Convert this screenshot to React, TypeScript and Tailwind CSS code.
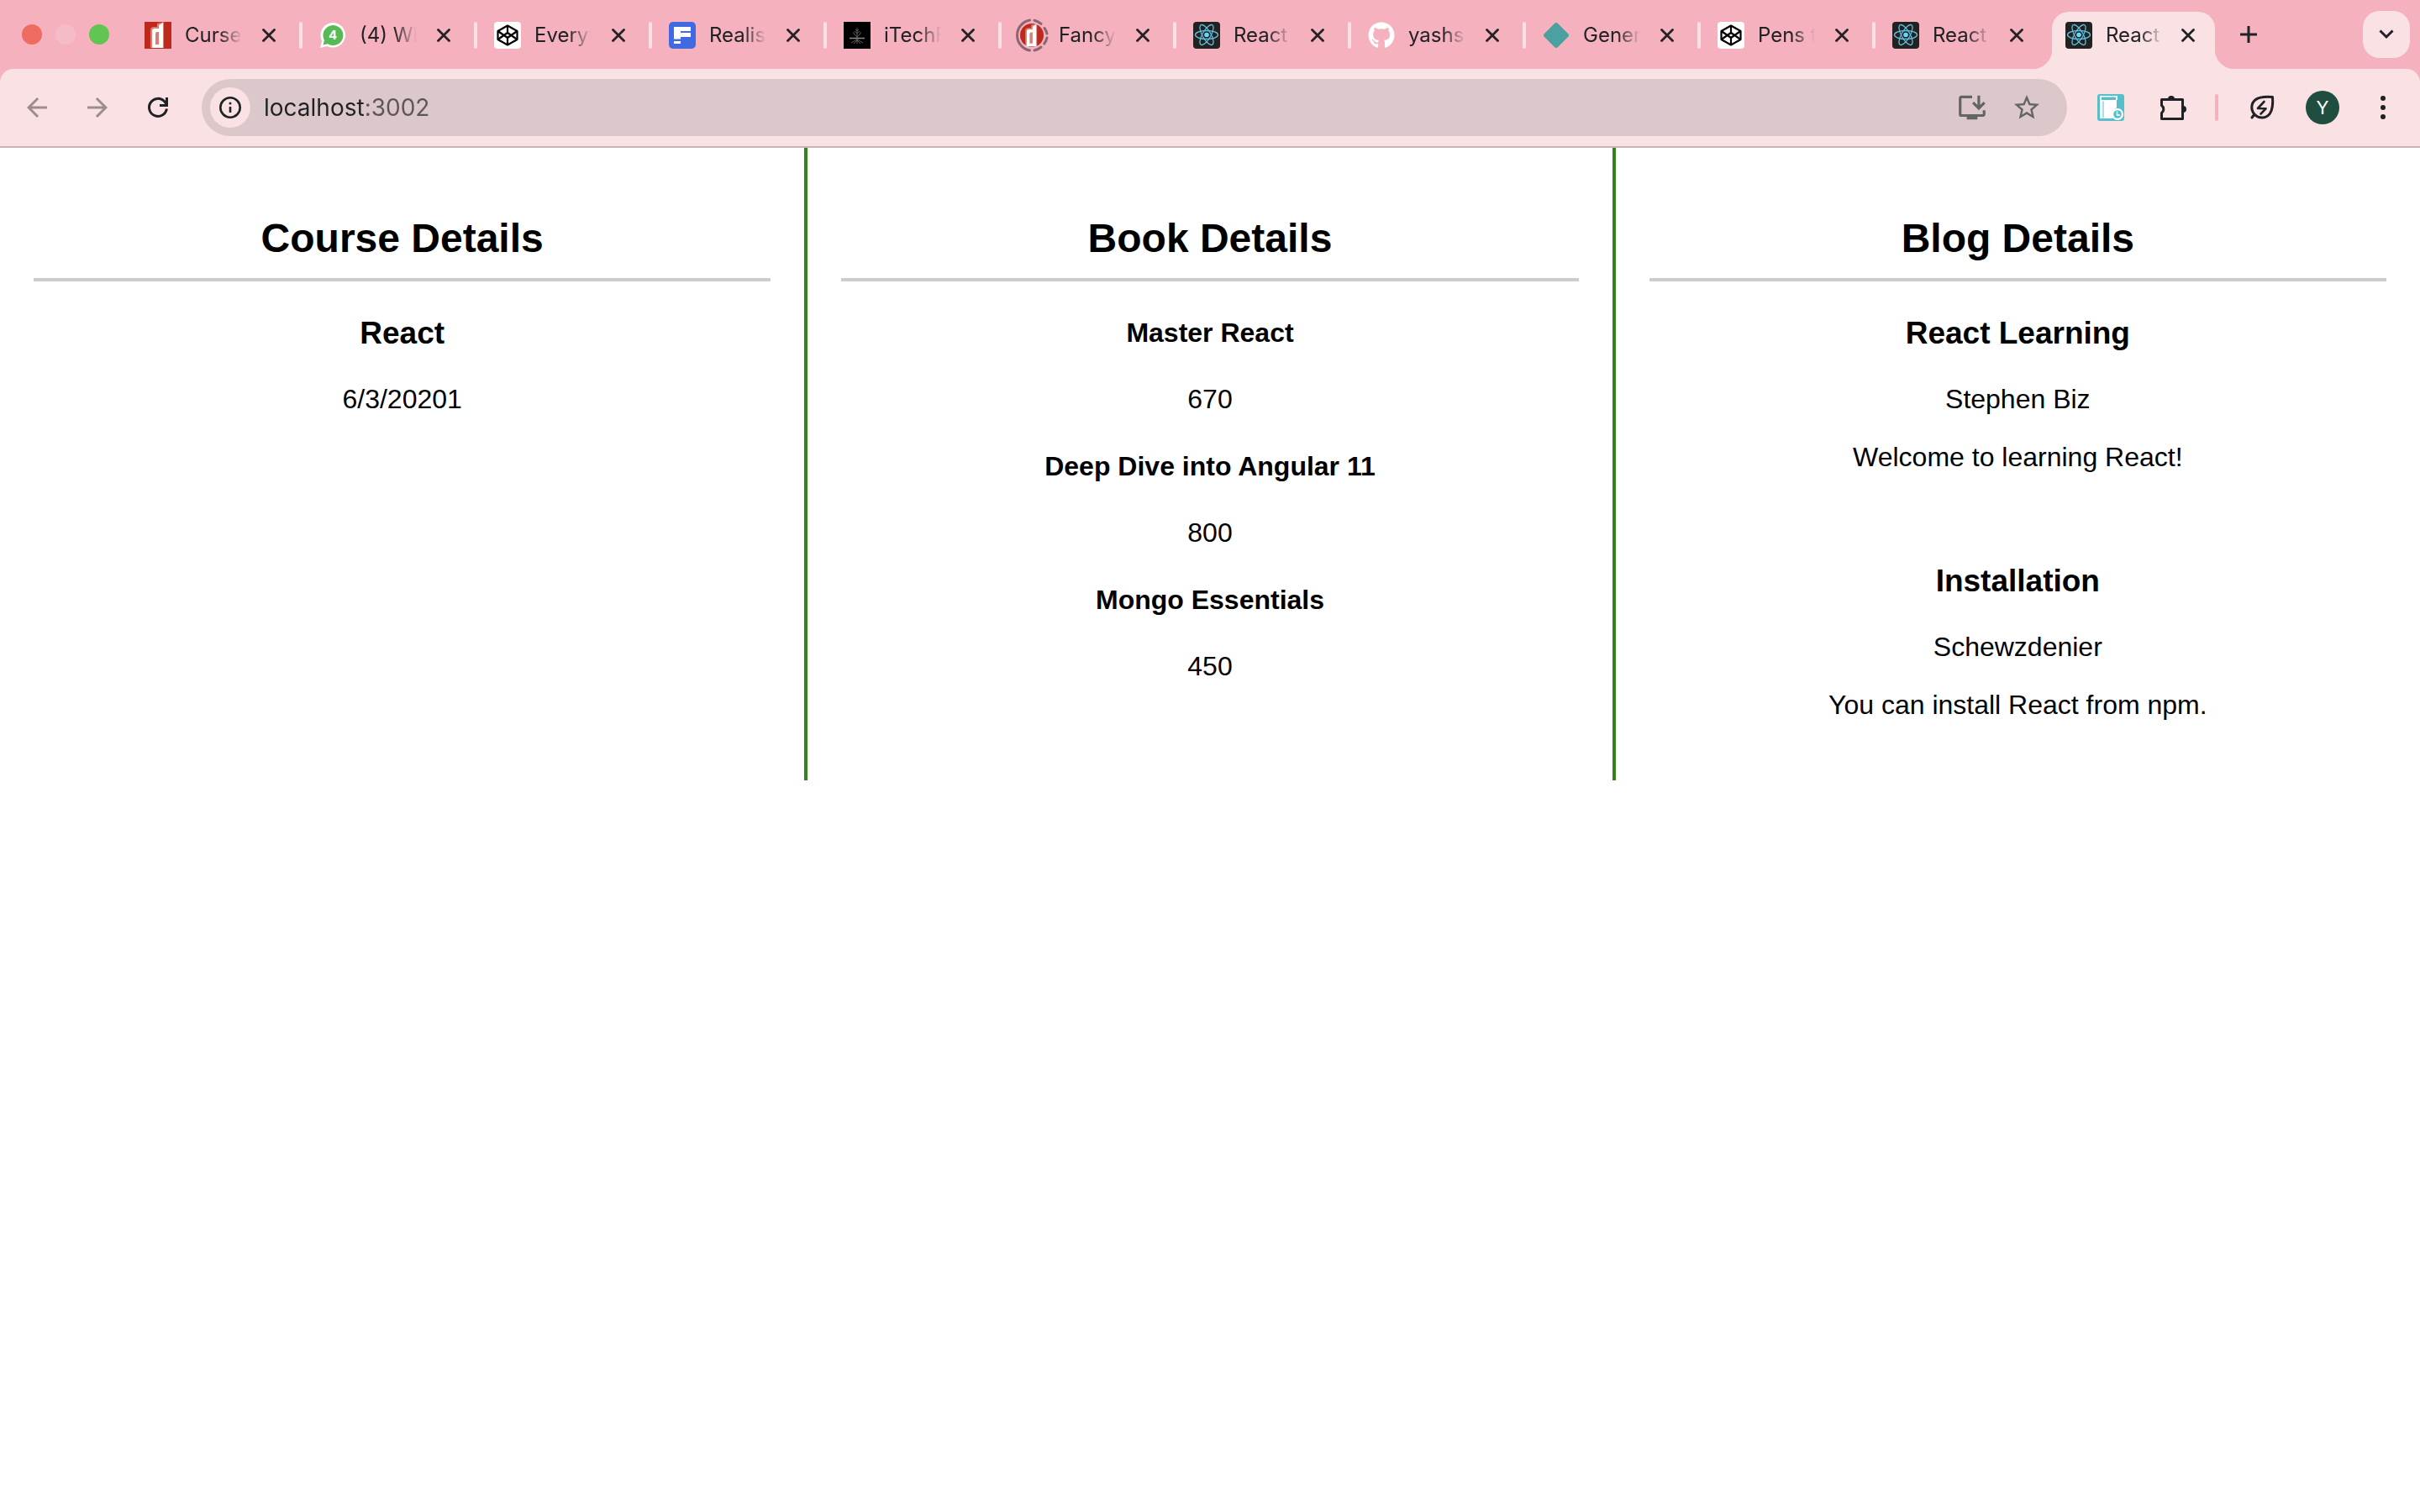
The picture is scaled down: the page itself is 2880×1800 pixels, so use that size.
import React from "react";
import { MdArrowBack, MdArrowForward, MdInstallDesktop, MdStarBorder } from "react-icons/md";
import { FaGithub } from "react-icons/fa";

function DLogo({ round = false }: { round?: boolean }) {
  return (
    <svg viewBox="0 0 32 32" className="size-full" aria-hidden="true">
      {round ? <circle cx="16" cy="16" r="16" fill="#bf281c" /> : <rect width="32" height="32" fill="#bf281c" />}
      <path d="M7 31V10q0-4 4-4h4V2l8-2v31Z" fill="#fff" opacity=".4" />
      <path d="M9 31V11q0-3 3-3h5V4l5-3v30ZM13 27h4V12h-2q-2 0-2 2Z" fill="#fff" fillRule="evenodd" />
    </svg>
  );
}

function WhatsAppIcon() {
  return (
    <svg viewBox="0 0 32 32" className="size-full" aria-hidden="true">
      <path d="M1 31 3 22.500A14.800 14.800 0 1 1 9.500 29Z" fill="#fff" />
      <path d="M4.500 27.500 6 22A12 12 0 1 1 10 26.200Z" fill="#57bb55" />
      <text x="16" y="21" textAnchor="middle" fontSize="15" fontWeight="700" fontFamily="Inter, sans-serif" fill="#fff">4</text>
    </svg>
  );
}

function CodePenIcon() {
  return (
    <svg viewBox="0 0 32 32" className="size-full" fill="none" aria-hidden="true">
      <rect width="32" height="32" rx="4" fill="#fff" />
      <g stroke="#000" strokeWidth="2.200" strokeLinejoin="round">
        <path d="M16 4.500 27.500 11v10L16 27.500 4.500 21V11Z" />
        <path d="m4.500 11 11.500 8 11.500-8M4.500 21 16 13l11.500 8M16 4.500V13M16 19v8.500" />
      </g>
    </svg>
  );
}

function FIcon() {
  return (
    <svg viewBox="0 0 32 32" className="size-full" aria-hidden="true">
      <rect width="32" height="32" rx="5" fill="#4169e1" />
      <path d="M6 6h20v5H14v2h12v5H14v2.500H6ZM6 23h8v3H6Z" fill="#fff" />
    </svg>
  );
}

function TreeIcon() {
  return (
    <svg viewBox="0 0 32 32" className="size-full" fill="none" aria-hidden="true">
      <rect width="32" height="32" fill="#000" />
      <g stroke="#5d5d5d" strokeWidth="1">
        <path d="M16 7v19M16 18l-4-4M16 18l4-4M16 14l-3-3M16 14l3-3M16 11l-2-2M16 11l2-2M12 14v-2M20 14v-2M16 21l-7 4M16 21l7 4M16 22l-4 4M16 22l4 4" />
        <path d="M7 19.500h18" stroke="#8a8a8a" strokeWidth="1.500" />
      </g>
    </svg>
  );
}

function ReactIcon() {
  return (
    <svg viewBox="0 0 32 32" className="size-full" fill="none" aria-hidden="true">
      <rect width="32" height="32" rx="4" fill="#222" />
      <circle cx="16" cy="15.500" r="2.800" fill="#61dafb" />
      <g stroke="#61bfe0" strokeWidth="1.300">
        <ellipse cx="16" cy="15.500" rx="13.500" ry="5" />
        <ellipse cx="16" cy="15.500" rx="13.500" ry="5" transform="rotate(60 16 15.500)" />
        <ellipse cx="16" cy="15.500" rx="13.500" ry="5" transform="rotate(120 16 15.500)" />
      </g>
    </svg>
  );
}

function DiamondIcon() {
  return (
    <svg viewBox="0 0 32 32" className="size-full" aria-hidden="true">
      <path d="M14 2q2-2 4 0l12.500 12.500q1.500 1.500 0 3L18 30q-2 2-4 0L1.500 17.500q-1.500-1.500 0-3Z" fill="#4aa19f" />
    </svg>
  );
}

function LoadingFavicon() {
  return (
    <span className="relative block size-full p-0.5">
      <DLogo round />
      <svg viewBox="0 0 40 40" className="absolute -top-1 -left-1 size-10 max-w-none" fill="none" aria-hidden="true">
        <path d="M17.500 2A18.300 18.300 0 0 0 17.500 38M23 2.200a18 18 0 0 1 8 4.200M35 11.500a18 18 0 0 1 3 6.500M38 23a18 18 0 0 1-3.200 7M31 34a18 18 0 0 1-8 4" stroke="#8a6670" strokeWidth="3" strokeLinecap="round" />
      </svg>
    </span>
  );
}

function CloseIcon() {
  return (
    <svg viewBox="0 0 16 16" className="size-4" fill="none" stroke="#202124" strokeWidth="2.800" strokeLinecap="round" aria-hidden="true">
      <path d="m1.500 1.500 13 13M14.500 1.500l-13 13" />
    </svg>
  );
}

type TabInfo = { title: string; icon: React.ReactNode };

const tabs: TabInfo[] = [
  { title: "Curse", icon: <DLogo /> },
  { title: "(4) Wh", icon: <WhatsAppIcon /> },
  { title: "Everyt", icon: <CodePenIcon /> },
  { title: "Realis", icon: <FIcon /> },
  { title: "iTechF", icon: <TreeIcon /> },
  { title: "Fancy", icon: <LoadingFavicon /> },
  { title: "React", icon: <ReactIcon /> },
  { title: "yashs", icon: <FaGithub className="size-full text-white" /> },
  { title: "Gener", icon: <DiamondIcon /> },
  { title: "Pens t", icon: <CodePenIcon /> },
  { title: "React", icon: <ReactIcon /> },
];

function TabBody({ tab }: { tab: TabInfo }) {
  return (
    <>
      <button type="button" className="flex items-center gap-4">
        <span className="size-8 shrink-0">{tab.icon}</span>
        <span className="w-[68px] text-left text-2xl whitespace-nowrap [mask-image:linear-gradient(to_right,black_60%,transparent)]">
          {tab.title}
        </span>
      </button>
      <button type="button" aria-label={`Close ${tab.title}`} className="flex size-8 items-center justify-center">
        <CloseIcon />
      </button>
    </>
  );
}

function TabStrip() {
  return (
    <div className="flex h-[82px] items-center bg-[#f5b1be] pr-3 pl-[26px]">
      <div className="mr-[22px] flex gap-4">
        <button type="button" aria-label="Close window" className="size-6 rounded-full bg-[#ed6b5f]" />
        <button type="button" aria-label="Minimize window" className="size-6 rounded-full bg-[#f4bcc6]" />
        <button type="button" aria-label="Zoom window" className="size-6 rounded-full bg-[#61c554]" />
      </div>
      {tabs.map((tab, i) => (
        <div key={i} className="flex h-14 w-52 items-center gap-4 pt-0.5 pl-5">
          <TabBody tab={tab} />
          {i < tabs.length - 1 && <span className="ml-auto h-8 w-1 rounded-xs bg-[#f9e1e4]" />}
        </div>
      ))}
      <div className="relative ml-0.5 flex h-[68px] w-[194px] items-center gap-3.5 self-end rounded-t-[20px] bg-[#f9e1e4] pb-3 pl-4">
        <span className="absolute bottom-0 -left-6 size-6 bg-[radial-gradient(circle_at_top_left,transparent_24px,#f9e1e4_25px)]" />
        <TabBody tab={{ title: "React", icon: <ReactIcon /> }} />
        <span className="absolute -right-6 bottom-0 size-6 bg-[radial-gradient(circle_at_top_right,transparent_24px,#f9e1e4_25px)]" />
      </div>
      <button type="button" aria-label="New tab" className="ml-6 flex size-8 items-center justify-center">
        <svg viewBox="0 0 20 20" className="size-5" stroke="#202124" strokeWidth="3" aria-hidden="true">
          <path d="M10 0v20M0 10h20" />
        </svg>
      </button>
      <button type="button" aria-label="Search tabs" className="ml-auto flex size-14 items-center justify-center rounded-[20px] bg-[#f9e1e4]">
        <svg viewBox="0 0 18 12" className="h-3 w-[18px]" fill="none" stroke="#202124" strokeWidth="3" aria-hidden="true">
          <path d="m1.500 1.500 7.500 7.500 7.500-7.500" />
        </svg>
      </button>
    </div>
  );
}

function Toolbar() {
  return (
    <div className="bg-[#f5b1be]">
      <div className="flex h-[94px] items-center rounded-t-2xl border-b-2 border-[#c9b5b9] bg-[#f9e1e4] pr-7 pl-[26px]">
        <button type="button" aria-label="Back" className="text-[#9d8c90]">
          <MdArrowBack className="size-9" />
        </button>
        <button type="button" aria-label="Forward" className="ml-9 text-[#9d8c90]">
          <MdArrowForward className="size-9" />
        </button>
        <button type="button" aria-label="Reload" className="ml-9">
          <svg viewBox="0 0 36 36" className="size-9" fill="none" stroke="#202124" strokeWidth="3" aria-hidden="true">
            <path d="M28.400 19.500A10.500 10.500 0 1 1 25.500 10.500L28 14" />
            <path d="M28.500 6v9.500H20" />
          </svg>
        </button>
        <div className="ml-[34px] flex h-[68px] grow items-center rounded-full bg-[#dcc8cb] pr-[30px] pl-2.5">
          <button type="button" aria-label="View site information" className="flex size-12 items-center justify-center rounded-full bg-[#f9e1e4]">
            <svg viewBox="0 0 26 26" className="size-[26px]" fill="none" stroke="#202124" aria-hidden="true">
              <circle cx="13" cy="13" r="11.700" strokeWidth="2.600" />
              <path d="M13 12v7" strokeWidth="2.600" />
              <circle cx="13" cy="8" r="1.500" fill="#202124" stroke="none" />
            </svg>
          </button>
          <input
            type="text"
            aria-label="Address"
            defaultValue="localhost:3002"
            className="ml-4 h-12 grow bg-[linear-gradient(to_right,#202124_121px,#5d5558_121px)] bg-clip-text text-[28px] text-transparent outline-none"
          />
          <button type="button" aria-label="Install app" className="text-[#636466]">
            <MdInstallDesktop className="size-[38px]" />
          </button>
          <button type="button" aria-label="Bookmark this tab" className="ml-7 text-[#636466]">
            <MdStarBorder className="size-9" />
          </button>
        </div>
        <button type="button" aria-label="Reading list extension" className="ml-9 size-8">
          <svg viewBox="0 0 32 32" className="size-8" aria-hidden="true">
            <rect width="32" height="32" rx="3" fill="#55c0cc" />
            <path d="M3 2h21v5h-1v9.500q-5.500 2-5.500 7.500 0 3 1.500 5H3Z" fill="#fff" />
            <path d="M5 3.500h17v3.500H5ZM6.500 8.500h1v19.500h-1Z" fill="#55c0cc" />
            <circle cx="24" cy="24" r="7" fill="#fff" />
            <circle cx="24" cy="24" r="4.800" fill="#55c0cc" />
            <path d="M23.500 20.500V25h3.500" fill="none" stroke="#fff" strokeWidth="1.500" />
          </svg>
        </button>
        <button type="button" aria-label="Extensions" className="ml-10 size-9">
          <svg viewBox="0 0 36 36" className="size-9" aria-hidden="true">
            <path d="M5 9.500h25V32.500H5V25.500a5.500 5.500 0 0 0 0-9Z" transform="translate(-.5 -1)" fill="none" stroke="#202124" strokeWidth="3" strokeLinejoin="round" />
            <path d="M12 8a4 4 0 0 1 8 0Z M30 16a4 4 0 0 1 0 8Z" fill="#202124" />
          </svg>
        </button>
        <span className="ml-8 h-8 w-1 rounded-full bg-[#f5b1be]" />
        <button type="button" aria-label="Energy saver" className="ml-9 size-8">
          <svg viewBox="0 0 32 32" className="size-8" fill="none" stroke="#202124" strokeWidth="3" strokeLinejoin="round" strokeLinecap="round" aria-hidden="true">
            <path d="M28.500 3.500C22 3 13 3 8.500 6.500 2.500 11 2.500 19 7 24c5.500 6 14.500 5 18.500-1C29 17.500 29 9.500 28.500 3.500ZM7 24l-3 4" />
            <path d="M18.500 9 11 17l9.500.3-6 6.200" strokeWidth="2.600" />
          </svg>
        </button>
        <button type="button" aria-label="Profile" className="ml-9 size-10 rounded-full bg-[#1f4d40] text-center text-[22px] text-white">
          Y
        </button>
        <button type="button" aria-label="Menu" className="ml-9 size-8">
          <svg viewBox="0 0 32 32" className="size-8" fill="#202124" aria-hidden="true">
            <circle cx="16" cy="5" r="3" />
            <circle cx="16" cy="16" r="3" />
            <circle cx="16" cy="27" r="3" />
          </svg>
        </button>
      </div>
    </div>
  );
}

const books = [
  { name: "Master React", price: 670 },
  { name: "Deep Dive into Angular 11", price: 800 },
  { name: "Mongo Essentials", price: 450 },
];

const blogs = [
  { title: "React Learning", author: "Stephen Biz", body: "Welcome to learning React!" },
  { title: "Installation", author: "Schewzdenier", body: "You can install React from npm." },
];

function Column({ title, children }: { title: string; children: React.ReactNode }) {
  return (
    <section className="flex-1 border-[#35801f] px-10 pt-20 pb-18 not-last:border-r-4">
      <h2 className="border-b-4 border-[#ccc] pb-5 text-[48px] leading-[55px] font-bold">{title}</h2>
      {children}
    </section>
  );
}

export default function App() {
  return (
    <div className="min-h-screen bg-white">
      <header className="font-[Inter,sans-serif] text-[#202124]">
        <TabStrip />
        <Toolbar />
      </header>
      <main className="flex text-center font-['Liberation_Sans',Arial,sans-serif] text-[32px] leading-9 text-black">
        <Column title="Course Details">
          <div className="mt-10">
            <h3 className="text-[37px] leading-11 font-bold">React</h3>
            <p className="mt-[38px]">6/3/20201</p>
          </div>
        </Column>
        <Column title="Book Details">
          <div className="mt-[43px] flex flex-col gap-11">
            {books.map((book) => (
              <div key={book.name}>
                <h4 className="font-bold">{book.name}</h4>
                <p className="mt-[43px]">{book.price}</p>
              </div>
            ))}
          </div>
        </Column>
        <Column title="Blog Details">
          <div className="mt-10 flex flex-col gap-[108px]">
            {blogs.map((blog) => (
              <article key={blog.title}>
                <h3 className="text-[37px] leading-11 font-bold">{blog.title}</h3>
                <p className="mt-[38px]">{blog.author}</p>
                <p className="mt-[33px]">{blog.body}</p>
              </article>
            ))}
          </div>
        </Column>
      </main>
    </div>
  );
}
